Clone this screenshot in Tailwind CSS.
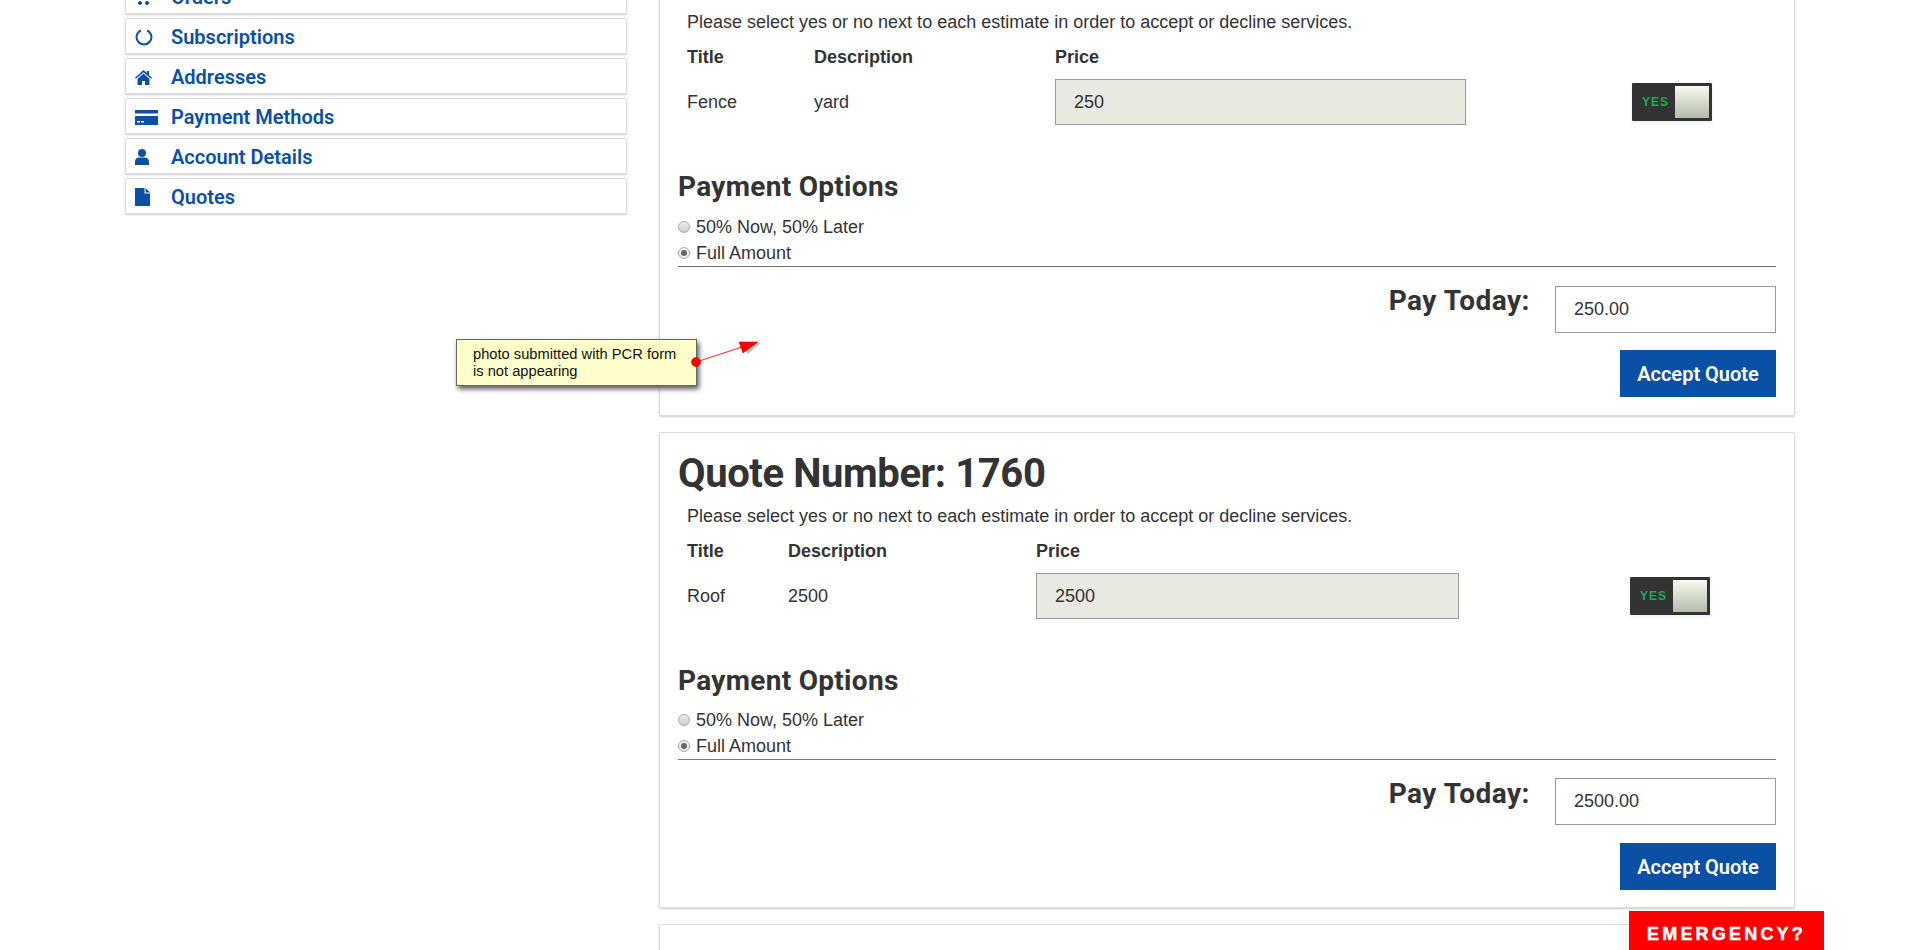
<!DOCTYPE html>
<html lang="en">
<head>
<meta charset="UTF-8">
<title>Quotes</title>
<script src="https://cdn.jsdelivr.net/npm/@tailwindcss/browser@4"></script>
</head>
<body class="relative h-[950px] overflow-hidden bg-white font-['Liberation_Sans',Arial,sans-serif] text-[18px] text-[#333]">
<div class="flex">
  <!-- account menu -->
  <nav class="ml-[125px] mt-[-22px] flex w-[502px] shrink-0 flex-col gap-[4px] font-['Roboto',sans-serif] text-[20px] font-semibold text-[#0a50a5]">
    <a class="flex h-[36px] items-center rounded-[2px] border border-[#ddd] pt-[2px] shadow-[0_1px_2px_#ccc]">
      <span class="flex w-[45px] justify-start pl-[9px]"><svg class="h-[16px] w-[16px]" viewBox="0 0 16 16" fill="#0a50a5"><path d="M1 1h14l-2 8H4L3 3H1zM5 12a2 2 0 1 0 .01 0M12 12a2 2 0 1 0 .01 0"/></svg></span>Orders
    </a>
    <a class="flex h-[36px] items-center rounded-[2px] border border-[#ddd] pt-[2px] shadow-[0_1px_2px_#ccc]">
      <span class="flex w-[45px] justify-start pl-[9px]"><svg class="h-[18px] w-[18px]" viewBox="0 0 18 18" fill="none" stroke="#0a50a5" stroke-width="2"><path d="M6 2.400A7.400 7.400 0 1 0 12 2.400"/></svg></span>Subscriptions
    </a>
    <a class="flex h-[36px] items-center rounded-[2px] border border-[#ddd] pt-[2px] shadow-[0_1px_2px_#ccc]">
      <span class="flex w-[45px] justify-start pl-[9px]"><svg class="h-[15px] w-[17px]" viewBox="0 0 17 15" fill="#0a50a5"><path d="M8.500 0 12 3V1h2v4l3 2.800-1 1L8.500 2.200 1 8.800 0 7.800z"/><path d="M8.500 3.600 14.500 9v6H10v-4H7v4H2.500V9z"/></svg></span>Addresses
    </a>
    <a class="flex h-[36px] items-center rounded-[2px] border border-[#ddd] pt-[2px] shadow-[0_1px_2px_#ccc]">
      <span class="flex w-[45px] justify-start pl-[9px]"><svg class="h-[15px] w-[23px]" viewBox="0 0 23 15" fill="#0a50a5"><path d="M0 0h23v3.500H0z"/><path d="M0 6h23v9H0z"/><path d="M2 11h3v1.500H2zM6 11h3v1.500H6z" fill="#fff"/></svg></span>Payment Methods
    </a>
    <a class="flex h-[36px] items-center rounded-[2px] border border-[#ddd] pt-[2px] shadow-[0_1px_2px_#ccc]">
      <span class="flex w-[45px] justify-start pl-[9px]"><svg class="h-[16px] w-[14px]" viewBox="0 0 14 16" fill="#0a50a5"><circle cx="7" cy="4" r="4"/><path d="M0 16v-3.500C0 10 2 8.500 4 8.500h6c2 0 4 1.500 4 4V16z"/></svg></span>Account Details
    </a>
    <a class="flex h-[36px] items-center rounded-[2px] border border-[#ddd] pt-[2px] shadow-[0_1px_2px_#ccc]">
      <span class="flex w-[45px] justify-start pl-[9px]"><svg class="h-[18px] w-[15px]" viewBox="0 0 15 18" fill="#0a50a5"><path d="M0 0h9.500v5.500H15V18H0z"/><path d="M10.500 0 15 4.500h-4.500z"/></svg></span>Quotes
    </a>
  </nav>

  <main class="ml-[32px] mt-[-60px] flex w-[1136px] shrink-0 flex-col gap-[16px]">
    <!-- quote 1759 -->
    <section class="h-[476px] shrink-0 rounded-[2px] border border-[#ddd] px-[18px] pt-[17px] shadow-[0_1px_2px_#ccc]">
      <h2 class="h-[44px] font-['Roboto',sans-serif] text-[40px] leading-[44px] font-bold tracking-[-0.4px]">Quote Number: 1759</h2>
      <p class="mt-[9px] pl-[9px] leading-[22px]">Please select yes or no next to each estimate in order to accept or decline services.</p>
      <div class="mt-[13px] grid grid-cols-[127px_241px_411px_auto] pl-[9px]">
        <div class="font-bold leading-[22px]">Title</div>
        <div class="font-bold leading-[22px]">Description</div>
        <div class="font-bold leading-[22px]">Price</div>
        <div></div>
      </div>
      <div class="mt-[11px] grid h-[46px] grid-cols-[127px_241px_411px_auto] items-center pl-[9px]">
        <div>Fence</div>
        <div>yard</div>
        <div class="flex h-[46px] w-[411px] items-center border border-[#999] bg-[#e9e9e2] pl-[18px]">250</div>
        <div class="ml-[166px] flex h-[38px] w-[80px] items-center justify-between rounded-[1px] bg-[#333] pl-[10px] pr-[3px] shadow-[0_2px_4px_#eee]">
          <span class="text-[12px] font-bold tracking-[1px] text-[#22a85a]">YES</span>
          <span class="h-[32px] w-[34px] bg-gradient-to-b from-[#f8fbef] to-[#b3bcaa]"></span>
        </div>
      </div>
      <h3 class="mt-[47px] h-[30px] font-['Roboto',sans-serif] text-[28px] leading-[30px] font-bold tracking-[0.3px]">Payment Options</h3>
      <div class="mt-[12px] flex h-[26px] items-center gap-[6px]">
        <span class="h-[12px] w-[12px] rounded-full border border-[#aaa] bg-gradient-to-b from-[#eee] to-[#ccc]"></span>50% Now, 50% Later
      </div>
      <div class="flex h-[26px] items-center gap-[6px]">
        <span class="flex h-[12px] w-[12px] items-center justify-center rounded-full border border-[#aaa] bg-[#eee]"><span class="h-[6px] w-[6px] rounded-full bg-[#666]"></span></span>Full Amount
      </div>
      <div class="border-t border-[#777]"></div>
      <div class="mt-[19px] flex items-start justify-end gap-[25px]">
        <div class="font-['Roboto',sans-serif] text-[28px] leading-[30px] font-bold tracking-[0.5px]">Pay Today:</div>
        <div class="flex h-[47px] w-[221px] items-center border border-[#999] pl-[18px]">250.00</div>
      </div>
      <div class="mt-[17px] flex justify-end">
        <button class="h-[47px] w-[156px] bg-[#0a50a5] font-['Roboto',sans-serif] text-[20px] font-semibold text-white">Accept Quote</button>
      </div>
    </section>

    <!-- quote 1760 -->
    <section class="h-[476px] shrink-0 rounded-[2px] border border-[#ddd] px-[18px] pt-[19px] shadow-[0_1px_2px_#ccc]">
      <h2 class="h-[44px] font-['Roboto',sans-serif] text-[40px] leading-[44px] font-bold tracking-[-0.4px]">Quote Number: 1760</h2>
      <p class="mt-[9px] pl-[9px] leading-[22px]">Please select yes or no next to each estimate in order to accept or decline services.</p>
      <div class="mt-[13px] grid grid-cols-[101px_248px_422px_auto] pl-[9px]">
        <div class="font-bold leading-[22px]">Title</div>
        <div class="font-bold leading-[22px]">Description</div>
        <div class="font-bold leading-[22px]">Price</div>
        <div></div>
      </div>
      <div class="mt-[11px] grid h-[46px] grid-cols-[101px_248px_422px_auto] items-center pl-[9px]">
        <div>Roof</div>
        <div>2500</div>
        <div class="flex h-[46px] w-[423px] items-center border border-[#999] bg-[#e9e9e2] pl-[18px]">2500</div>
        <div class="ml-[172px] flex h-[38px] w-[80px] items-center justify-between rounded-[1px] bg-[#333] pl-[10px] pr-[3px] shadow-[0_2px_4px_#eee]">
          <span class="text-[12px] font-bold tracking-[1px] text-[#22a85a]">YES</span>
          <span class="h-[32px] w-[34px] bg-gradient-to-b from-[#f8fbef] to-[#b3bcaa]"></span>
        </div>
      </div>
      <h3 class="mt-[47px] h-[30px] font-['Roboto',sans-serif] text-[28px] leading-[30px] font-bold tracking-[0.3px]">Payment Options</h3>
      <div class="mt-[11px] flex h-[26px] items-center gap-[6px]">
        <span class="h-[12px] w-[12px] rounded-full border border-[#aaa] bg-gradient-to-b from-[#eee] to-[#ccc]"></span>50% Now, 50% Later
      </div>
      <div class="flex h-[26px] items-center gap-[6px]">
        <span class="flex h-[12px] w-[12px] items-center justify-center rounded-full border border-[#aaa] bg-[#eee]"><span class="h-[6px] w-[6px] rounded-full bg-[#666]"></span></span>Full Amount
      </div>
      <div class="border-t border-[#777]"></div>
      <div class="mt-[18px] flex items-start justify-end gap-[25px]">
        <div class="pt-[1px] font-['Roboto',sans-serif] text-[28px] leading-[30px] font-bold tracking-[0.5px]">Pay Today:</div>
        <div class="flex h-[47px] w-[221px] items-center border border-[#999] pl-[18px]">2500.00</div>
      </div>
      <div class="mt-[18px] flex justify-end">
        <button class="h-[47px] w-[156px] bg-[#0a50a5] font-['Roboto',sans-serif] text-[20px] font-semibold text-white">Accept Quote</button>
      </div>
    </section>

    <section class="h-[476px] shrink-0 rounded-[2px] border border-[#ddd] shadow-[0_1px_2px_#ccc]"></section>
  </main>
</div>

<!-- review annotation over the page -->
<div class="absolute left-[456px] top-[339px] h-[47px] w-[241px] border border-[#666] bg-[#ffffcc] pl-[16px] pt-[6px] text-[14.7px] leading-[17px] text-[#111] shadow-[2px_3px_5px_#555]">photo submitted with PCR form<br>is not appearing</div>
<svg class="absolute left-[680px] top-[330px] h-[50px] w-[90px]" viewBox="680 330 90 50">
  <path d="M741 343 761 343 748 354z" fill="#999" opacity=".6"/>
  <path d="M696 362 745 346" stroke="#f33" stroke-width="1.200"/>
  <path d="M739 342H758L743 353z" fill="#f00" stroke="#a00" stroke-width=".5"/>
  <circle cx="696" cy="362" r="4.500" fill="#f00" stroke="#a00" stroke-width=".5"/>
</svg>

<div class="absolute left-[1629px] top-[911px] flex h-[39px] w-[195px] items-center justify-center bg-[#f00] pt-[7px] text-[18px] font-bold tracking-[3.200px] text-white [-webkit-text-stroke:0.5px_white]">EMERGENCY?</div>
</body>
</html>
